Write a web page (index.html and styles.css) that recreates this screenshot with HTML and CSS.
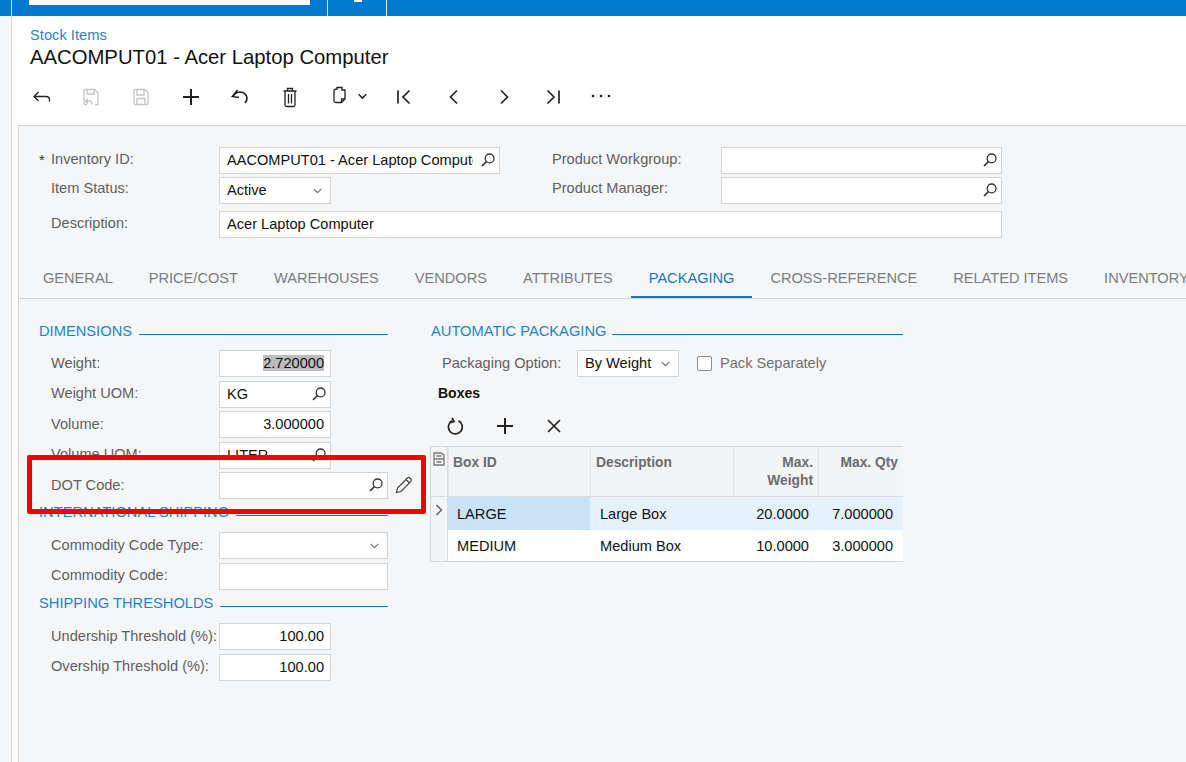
FILE: index.html
```html
<!DOCTYPE html>
<html lang="en">
<head>
<meta charset="utf-8">
<title>Stock Items</title>
<link rel="stylesheet" href="styles.css">
</head>
<body>
<svg class="defs" width="0" height="0" aria-hidden="true">
  <symbol id="search" viewBox="0 0 16 16"><circle cx="9.6" cy="6.4" r="4.4" fill="none" stroke="currentColor" stroke-width="1.3"/><path d="M6.4 9.6 2 14" fill="none" stroke="currentColor" stroke-width="1.6"/></symbol>
  <symbol id="chev" viewBox="0 0 10 10"><path d="M1.5 3.5 5 7l3.5-3.5" fill="none" stroke="currentColor" stroke-width="1.1"/></symbol>
</svg>
<div class="topbar">
  <div class="top-side"></div>
  <div class="top-search"><div class="search-box"></div></div>
  <div class="top-icon"><span class="top-glyph"></span></div>
</div>
<div class="shell">
  <div class="rail"></div>
  <main class="content">
    <header class="head">
      <a class="crumb">Stock Items</a>
      <h1 class="title">AACOMPUT01 - Acer Laptop Computer</h1>
    </header>
    <div class="toolbar">
      <span class="tool"><svg class="ico" viewBox="0 0 20 20"><path d="M6.500 5 2 9.500l4.500 4.500M2 9.500h12c2 0 3.500 1 3.500 3.500v1.500"/></svg></span>
      <span class="tool off"><svg class="ico" viewBox="0 0 20 20"><path d="M6 17.500H4.500a1.500 1.500 0 0 1-1.500-1.500V4a1.500 1.500 0 0 1 1.500-1.500h9L17 6v11.500h-3M6 2.500V7h7V2.500M7 11.500l-2.500 2.500L7 16.500M4.500 14H9c1.500 0 2 1.200 2 3.500"/></svg></span>
      <span class="tool off"><svg class="ico" viewBox="0 0 20 20"><path d="M4.500 2.500h9.500L17 5.500V16a1.500 1.500 0 0 1-1.500 1.500h-11A1.500 1.500 0 0 1 3 16V4a1.500 1.500 0 0 1 1.500-1.500zM6 2.500V8h7V2.500M6 17.500v-6h8v6"/></svg></span>
      <span class="tool"><svg class="ico" viewBox="0 0 20 20"><path class="thick" d="M10 2v16M2 10h16"/></svg></span>
      <span class="tool"><svg class="ico" viewBox="0 0 20 20"><path class="mid" d="M7.500 3 2.500 9.500l6.500 1M3 9.500C5 6.500 7.500 5 10 5c4 0 7 2.800 7 6 0 2.200-.8 3.700-2 5"/></svg></span>
      <span class="tool"><svg class="ico tall" viewBox="0 0 20 22"><path d="M3.500 5h13M7.500 4.800V2.500h5v2.300M5 5v14c0 1 .5 1.500 1.500 1.500h7c1 0 1.500-.5 1.500-1.500V5M8.500 8v9.500M11.500 8v9.500"/></svg></span>
      <span class="tool wide"><svg class="ico raise" viewBox="0 0 20 20"><path d="M7 4V2.500h5V5h3v9l-3.500 3.500H6c-1 0-2-.5-2-1.500V5.500C4 4.500 5 4 7 4zM11.500 17.500V14H15"/></svg><svg class="ico-s" viewBox="0 0 10 10"><path d="M1.500 3 5 6.500 8.500 3"/></svg></span>
      <span class="tool"><svg class="ico" viewBox="0 0 20 20"><path class="mid" d="M4 3.500v13M15.500 3.500 9 10l6.500 6.500"/></svg></span>
      <span class="tool"><svg class="ico" viewBox="0 0 20 20"><path class="mid" d="M13 3.500 6.500 10l6.500 6.500"/></svg></span>
      <span class="tool"><svg class="ico" viewBox="0 0 20 20"><path class="mid" d="M7 3.500 13.500 10 7 16.500"/></svg></span>
      <span class="tool"><svg class="ico" viewBox="0 0 20 20"><path class="mid" d="M16 3.500v13M4.500 3.500 11 10l-6.500 6.500"/></svg></span>
      <span class="tool dots"><svg class="ico-d" viewBox="0 0 20 4"><circle cx="2" cy="2" r="1.300"/><circle cx="10" cy="2" r="1.300"/><circle cx="18" cy="2" r="1.300"/></svg></span>
    </div>
    <section class="panel">
      <div class="summary">
        <div class="sum-col">
          <div class="row"><label class="lbl"><span class="req">*</span>Inventory ID:</label><div class="field f-281"><span class="clip">AACOMPUT01 - Acer Laptop Computer</span><svg class="s-ico"><use href="#search"/></svg></div></div>
          <div class="row"><label class="lbl">Item Status:</label><div class="field f-112"><span class="clip">Active</span><svg class="c-ico"><use href="#chev"/></svg></div></div>
        </div>
        <div class="sum-col second">
          <div class="row"><label class="lbl">Product Workgroup:</label><div class="field f-281"><span class="clip"></span><svg class="s-ico"><use href="#search"/></svg></div></div>
          <div class="row"><label class="lbl">Product Manager:</label><div class="field f-281"><span class="clip"></span><svg class="s-ico"><use href="#search"/></svg></div></div>
        </div>
        <div class="row desc"><label class="lbl">Description:</label><div class="field f-783"><span class="clip">Acer Laptop Computer</span></div></div>
      </div>
      <nav class="tabs">
        <span class="tab">GENERAL</span><span class="tab">PRICE/COST</span><span class="tab">WAREHOUSES</span><span class="tab">VENDORS</span><span class="tab">ATTRIBUTES</span><span class="tab active">PACKAGING</span><span class="tab">CROSS-REFERENCE</span><span class="tab">RELATED ITEMS</span><span class="tab">INVENTORY PLANNING</span>
      </nav>
      <div class="body">
        <div class="left">
          <h2 class="sec"><span>DIMENSIONS</span></h2>
          <div class="row d"><label class="lbl">Weight:</label><div class="field f-112 num"><span class="sel">2.720000</span></div></div>
          <div class="row d"><label class="lbl">Weight UOM:</label><div class="field f-112"><span class="clip">KG</span><svg class="s-ico"><use href="#search"/></svg></div></div>
          <div class="row d"><label class="lbl">Volume:</label><div class="field f-112 num"><span>3.000000</span></div></div>
          <div class="row d"><label class="lbl">Volume UOM:</label><div class="field f-112"><span class="clip">LITER</span><svg class="s-ico"><use href="#search"/></svg></div></div>
          <div class="row d"><label class="lbl">DOT Code:</label><div class="field f-169"><span class="clip"></span><svg class="s-ico"><use href="#search"/></svg></div><svg class="pencil" viewBox="0 0 18 18"><path d="M1.500 16.500l1-4.500L12.500 2c.8-.8 1.700-.8 2.400 0l1 1c.7.800.7 1.600 0 2.400L6 15.500zM11 3.500l3.500 3.500"/></svg></div>
          <h2 class="sec s2"><span>INTERNATIONAL SHIPPING</span></h2>
          <div class="row d"><label class="lbl">Commodity Code Type:</label><div class="field f-169"><span class="clip"></span><svg class="c-ico"><use href="#chev"/></svg></div></div>
          <div class="row d"><label class="lbl">Commodity Code:</label><div class="field f-169"></div></div>
          <h2 class="sec s3"><span>SHIPPING THRESHOLDS</span></h2>
          <div class="row d"><label class="lbl">Undership Threshold (%):</label><div class="field f-112 num"><span>100.00</span></div></div>
          <div class="row d"><label class="lbl">Overship Threshold (%):</label><div class="field f-112 num"><span>100.00</span></div></div>
        </div>
        <div class="right">
          <h2 class="sec"><span>AUTOMATIC PACKAGING</span></h2>
          <div class="opt">
            <label class="lbl-o">Packaging Option:</label>
            <div class="field f-102"><span class="clip">By Weight</span><svg class="c-ico"><use href="#chev"/></svg></div>
            <span class="check"></span>
            <span class="check-l">Pack Separately</span>
          </div>
          <div class="boxes">Boxes</div>
          <div class="gridbar">
            <svg class="ico" viewBox="0 0 20 20"><path class="mid" d="M12.500 4.200A7 7 0 1 1 6 4.300M6 1.500l2 3.500-3.800 1.200" transform="translate(0 .5)"/></svg>
            <svg class="ico" viewBox="0 0 20 20"><path class="thick" d="M10 2v16M2 10h16"/></svg>
            <svg class="ico" viewBox="0 0 20 20"><path class="mid" d="M4 4l12 12M16 4 4 16"/></svg>
          </div>
          <div class="grid">
            <div class="g-row g-head">
              <div class="c c0"><svg class="cfg" viewBox="0 0 12 14"><path d="M1 1h7l3 2v4H1zM1 7h10v6H1zM3.500 4h5M3.500 10h5"/></svg></div>
              <div class="c c1">Box ID</div><div class="c c2">Description</div><div class="c c3 r">Max. Weight</div><div class="c c4 r">Max. Qty</div>
            </div>
            <div class="g-row g-cur">
              <div class="c c0"><svg class="arrow" viewBox="0 0 8 12"><path d="M1.500 1 6.500 6l-5 5"/></svg></div>
              <div class="c c1 on">LARGE</div><div class="c c2">Large Box</div><div class="c c3 r">20.0000</div><div class="c c4 r">7.000000</div>
            </div>
            <div class="g-row">
              <div class="c c0"></div>
              <div class="c c1">MEDIUM</div><div class="c c2">Medium Box</div><div class="c c3 r">10.0000</div><div class="c c4 r">3.000000</div>
            </div>
          </div>
        </div>
      </div>
    </section>
  </main>
</div>
<div class="callout"></div>
</body>
</html>
```
FILE: styles.css
```css
* { box-sizing: border-box; }
html, body { margin: 0; height: 100%; overflow: hidden; }
body { font-family: "Liberation Sans", Arial, sans-serif; font-size: 14.6px; color: #111; background: #fff; display: flex; flex-direction: column; }
.defs { position: absolute; }

.topbar { height: 16px; background: #007acc; display: flex; flex: none; }
.top-side { width: 12px; border-right: 1px solid #d5e6f3; }
.top-search { width: 316px; padding-left: 17px; border-right: 1px solid #d5e6f3; }
.search-box { width: 281px; height: 5px; background: #fff; }
.top-icon { width: 59px; border-right: 1px solid #d5e6f3; display: flex; justify-content: center; padding-left: 1px; }
.top-glyph { width: 8px; height: 2px; background: #fff; }

.shell { flex: 1; display: flex; min-height: 0; }
.rail { width: 12px; flex: none; background: #f4f6f8; border-right: 1px solid #d4d4d4; }
.content { flex: 1; min-width: 0; display: flex; flex-direction: column; }

.head { padding: 11px 0 0 18px; height: 57px; }
.crumb { display: block; color: #2a85c5; font-size: 14.7px; line-height: 17px; }
.title { margin: 1px 0 0; font-size: 20.3px; font-weight: 400; line-height: 24px; color: #111; }

.toolbar { height: 52px; display: flex; align-items: center; padding: 0 0 4px 5px; flex: none; }
.tool { width: 49.600px; display: flex; justify-content: center; align-items: center; color: #222; }
.tool.off { color: #c4c4c4; }
.tool.wide { width: 65px; gap: 7px; padding-left: 3px; }
.tool.dots { margin-left: -2px; }
.ico { width: 20px; height: 20px; flex: none; fill: none; stroke: currentColor; stroke-width: 1.300; }
.tall { height: 22px; }
.thick { stroke-width: 2; }
.mid { stroke-width: 1.700; }
.raise { margin-top: -4px; }
.ico-s { width: 11px; height: 11px; flex: none; fill: none; stroke: currentColor; stroke-width: 1.400; margin-top: -2px; }
.ico-d { width: 20px; height: 4px; fill: currentColor; margin-top: -3px; }

.panel { flex: 1; margin-left: 6px; background: #f5f6f8; border-left: 1px solid #d4d4d4; border-top: 1px solid #d4d4d4; min-height: 0; }

.summary { height: 138px; padding: 21px 0 0 20px; display: grid; grid-template-columns: 501px 1fr; grid-template-rows: 64px auto; align-content: start; }
.second .lbl { width: 181px; }
.desc { grid-column: 1 / 3; }
.sum-col .row { margin-bottom: 3px; }
.summary .lbl { margin-top: -3px; }
.summary .row + .row .lbl { margin-top: -5px; }

.row { display: flex; align-items: center; height: 27px; }
.lbl { width: 180px; flex: none; padding-left: 12px; color: #5f5f5f; font-size: 14.600px; position: relative; white-space: nowrap; margin-top: -2px; }
.req { position: absolute; left: 0; top: 1px; color: #333; }
.field { height: 27px; flex: none; background: #fff; border: 1px solid #d2d5d8; display: flex; align-items: center; padding: 0 3px 1px 7px; color: #111; font-size: 14.600px; gap: 7px; }
.clip { flex: 1; min-width: 0; overflow: hidden; white-space: nowrap; }
.f-281 { width: 281px; }
.f-112 { width: 112px; }
.f-169 { width: 169px; }
.f-783 { width: 783px; }
.f-102 { width: 102px; }
.s-ico { width: 16px; height: 16px; flex: none; color: #333; }
.c-ico { width: 11px; height: 11px; flex: none; color: #777; margin-right: 4px; }
.num { justify-content: flex-end; padding-right: 6px; }
.sel { background: #bdbdbd; }

.tabs { height: 35px; display: flex; border-bottom: 1px solid #d2d5d8; padding-left: 6px; white-space: nowrap; overflow: hidden; }
.tab { padding: 6px 18px 0; color: #7a7d80; font-size: 14.600px; height: 35px; flex: none; }
.tab.active { color: #1976b8; border-bottom: 3px solid #0f77bd; }

.body { display: flex; padding: 23px 0 0 20px; }
.left { width: 349px; flex: none; }
.right { width: 473px; margin-left: 42px; }
.sec { margin: 0 0 10px; height: 18px; display: flex; align-items: flex-end; font-size: 14.700px; font-weight: 400; color: #1f84c4; line-height: 18px; gap: 7px; }
.sec span { white-space: nowrap; }
.right .sec { padding-left: 1px; gap: 6px; }
.sec::after { content: ""; flex: 1; border-bottom: 1px solid #1476b6; margin-bottom: 5px; }
.s2 { margin-bottom: 11.500px; }
.s3 { margin: 4.500px 0 11px; }
.row.d { margin-bottom: 3.500px; }
.pencil { width: 18px; height: 18px; flex: none; margin-left: 7px; fill: none; stroke: #444; stroke-width: 1.200; margin-top: -2px; }

.opt { display: flex; align-items: center; height: 27px; padding-left: 12px; }
.lbl-o { width: 135px; flex: none; color: #5f5f5f; font-size: 14.600px; margin-top: -2px; }
.check { width: 15px; height: 15px; margin-left: 18px; border: 1px solid #8a8d90; border-radius: 2px; background: #fff; }
.check-l { margin-left: 8px; color: #6f6f6f; font-size: 14.600px; margin-top: -2px; }
.boxes { font-weight: 700; font-size: 14px; margin: 8px 0 0 8px; line-height: 17px; }
.gridbar { display: flex; height: 36px; gap: 29px; align-items: center; padding-left: 16px; margin-top: 6px; color: #222; }

.grid { border: 1px solid #d2d5d8; border-right: 0; background: #fff; margin-top: 2px; }
.g-row { display: flex; height: 33px; align-items: center; }
.g-row + .g-row { height: 31px; }
.g-head { height: 50px; align-items: stretch; background: #f3f4f6; font-weight: 700; color: #6b6b6b; line-height: 18px; border-bottom: 1px solid #d9dbde; }
.g-head + .g-row { height: 33px; }
.c { height: 100%; flex: none; padding: 0 9px; display: flex; align-items: center; font-size: 14.600px; }
.g-head .c { align-items: flex-start; padding: 7px 5px; border-left: 1px solid #e2e4e7; font-size: 13.800px; }
.g-head .c1 { padding-left: 4px; }
.c0 { width: 17px; background: #f3f4f6; padding: 0; border-right: 1px solid #d9dbde; justify-content: center; }
.g-head .c0 { border-left: 0; padding: 5px 0 0; justify-content: center; }
.c1 { width: 142px; }
.c2 { width: 143px; padding-left: 10px; }
.c3 { width: 85px; }
.c4 { width: 85px; padding-right: 10px; }
.r { justify-content: flex-end; text-align: right; }
.g-cur { background: #e6f2fb; }
.on { background: #c9e2f5; }
.cfg { width: 12px; height: 14px; fill: none; stroke: #777; stroke-width: 1.300; }
.arrow { width: 8px; height: 12px; fill: none; stroke: #666; stroke-width: 1.500; margin-top: -7px; }

.callout { position: absolute; left: 27px; top: 455px; width: 399px; height: 59px; border: 5px solid #f5000a; border-radius: 2px; }
```
